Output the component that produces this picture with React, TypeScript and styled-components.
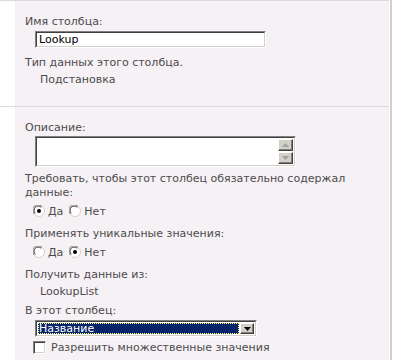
import React from 'react';
import styled, { createGlobalStyle } from 'styled-components';

const GlobalStyle = createGlobalStyle`
  html, body {
    margin: 0;
    padding: 0;
    background: #fff;
  }
  body {
    font-family: "DejaVu Sans", Verdana, sans-serif;
    font-size: 11px;
    color: #4c4c4c;
  }
`;

const Page = styled.div`
  display: flex;
  width: 393px;
  height: 360px;
  overflow: hidden;
`;

const Main = styled.div`
  width: 389px;
  display: flex;
  flex-direction: column;
`;

const RightBar = styled.div`
  margin-left: 1px;
  width: 2px;
  background: #d4d0c8;
`;

const Section = styled.div<{ $height?: number }>`
  display: grid;
  grid-template-columns: 15px 1fr;
  border-top: 1px solid #dcd8dc;
  height: ${(p) => (p.$height ? `${p.$height}px` : 'auto')};
  flex: ${(p) => (p.$height ? 'none' : '1')};
`;

const Gutter = styled.div`
  background: #fff;
`;

const Panel = styled.div<{ $top: number }>`
  background: #f6f1f5;
  padding: ${(p) => p.$top}px 0 0 10px;
`;

const Label = styled.div<{ $mt?: number }>`
  line-height: 14px;
  margin-top: ${(p) => p.$mt ?? 0}px;
  white-space: nowrap;
`;

const Value = styled(Label)`
  padding-left: 15px;
`;

const Sunken = styled.div<{ $w: number; $h: number; $mt?: number }>`
  position: relative;
  box-sizing: border-box;
  width: ${(p) => p.$w}px;
  height: ${(p) => p.$h}px;
  margin: ${(p) => p.$mt ?? 0}px 0 0 10px;
  border-top: 1px solid #808080;
  border-left: 1px solid #808080;
  border-right: 1px solid #fff;
  border-bottom: 1px solid #fff;
  background: #fff;
  &::before {
    content: '';
    position: absolute;
    inset: 0;
    border-top: 1px solid #404040;
    border-left: 1px solid #404040;
    border-right: 1px solid #d4d0c8;
    border-bottom: 1px solid #d4d0c8;
    pointer-events: none;
  }
`;

const InputText = styled.div`
  padding: 1px 0 0 3px;
  line-height: 13px;
  color: #000;
  font-size: 11px;
`;

const ScrollCol = styled.div`
  position: absolute;
  top: 2px;
  right: 2px;
  bottom: 2px;
  width: 15px;
  display: flex;
  flex-direction: column;
  gap: 1px;
`;

const ArrowButton = styled.div`
  flex: 1;
  display: flex;
  align-items: center;
  justify-content: center;
  background: #d4d0c8;
  border-top: 1px solid #fff;
  border-left: 1px solid #fff;
  border-right: 1px solid #404040;
  border-bottom: 1px solid #404040;
  box-shadow: inset -1px -1px #808080;
`;

const Arrow = ({ up, color = '#a0a0a0' }: { up?: boolean; color?: string }) => (
  <svg width="7" height="4" viewBox="0 0 7 4">
    {up ? <path d="M3.5 0 L7 4 L0 4 Z" fill={color} /> : <path d="M0 0 L7 0 L3.5 4 Z" fill={color} />}
  </svg>
);

const SelectFace = styled.div`
  position: absolute;
  inset: 2px 17px 2px 2px;
  background: #0a246a;
  color: #fff;
  outline: 1px dotted #ffff80;
  outline-offset: -1px;
  padding-left: 1px;
  line-height: 12px;
`;

const SelectButton = styled(ArrowButton)`
  position: absolute;
  top: 2px;
  right: 2px;
  bottom: 2px;
  width: 14px;
  box-sizing: border-box;
`;

const Options = styled.div`
  display: flex;
  align-items: center;
  margin: 4px 0 0 8px;
  height: 14px;
`;

const Choice = styled.span`
  display: inline-flex;
  align-items: center;
  gap: 3px;
  margin-right: 6px;
`;

const Radio = ({ checked }: { checked?: boolean }) => (
  <svg width="12" height="12" viewBox="0 0 12 12">
    <circle cx="6" cy="6" r="5.5" fill="#fff" stroke="#d4d0c8" />
    <path d="M1.2 9 A5 5 0 0 1 9 1.2" fill="none" stroke="#808080" strokeWidth="1" />
    <path d="M2.3 8.2 A3.9 3.9 0 0 1 8.2 2.3" fill="none" stroke="#404040" strokeWidth="1" />
    {checked && <circle cx="6" cy="6" r="2" fill="#000" />}
  </svg>
);

const CheckRow = styled(Options)`
  margin-top: 3px;
  gap: 5px;
`;

const CheckBox = styled.span`
  width: 13px;
  height: 13px;
  box-sizing: border-box;
  background: #fff;
  border-top: 1px solid #808080;
  border-left: 1px solid #808080;
  border-right: 1px solid #fff;
  border-bottom: 1px solid #fff;
  box-shadow: inset 1px 1px #404040, inset -1px -1px #d4d0c8;
`;

export default function App() {
  return (
    <Page>
      <GlobalStyle />
      <Main>
        <Section $height={105}>
          <Gutter />
          <Panel $top={14}>
            <Label>Имя столбца:</Label>
            <Sunken $w={231} $h={17} $mt={2}>
              <InputText>Lookup</InputText>
            </Sunken>
            <Label $mt={8}>Тип данных этого столбца.</Label>
            <Value $mt={3}>Подстановка</Value>
          </Panel>
        </Section>
        <Section>
          <Gutter />
          <Panel $top={14}>
            <Label>Описание:</Label>
            <Sunken $w={261} $h={31} $mt={1}>
              <ScrollCol>
                <ArrowButton>
                  <Arrow up />
                </ArrowButton>
                <ArrowButton>
                  <Arrow />
                </ArrowButton>
              </ScrollCol>
            </Sunken>
            <Label $mt={5}>Требовать, чтобы этот столбец обязательно содержал</Label>
            <Label>данные:</Label>
            <Options>
              <Choice>
                <Radio checked />
                Да
              </Choice>
              <Choice>
                <Radio />
                Нет
              </Choice>
            </Options>
            <Label $mt={9}>Применять уникальные значения:</Label>
            <Options>
              <Choice>
                <Radio />
                Да
              </Choice>
              <Choice>
                <Radio checked />
                Нет
              </Choice>
            </Options>
            <Label $mt={9}>Получить данные из:</Label>
            <Value $mt={3}>LookupList</Value>
            <Label $mt={5}>В этот столбец:</Label>
            <Sunken $w={222} $h={17} $mt={2}>
              <SelectFace>Название</SelectFace>
              <SelectButton>
                <Arrow color="#000" />
              </SelectButton>
            </Sunken>
            <CheckRow>
              <CheckBox />
              Разрешить множественные значения
            </CheckRow>
          </Panel>
        </Section>
      </Main>
      <RightBar />
    </Page>
  );
}
